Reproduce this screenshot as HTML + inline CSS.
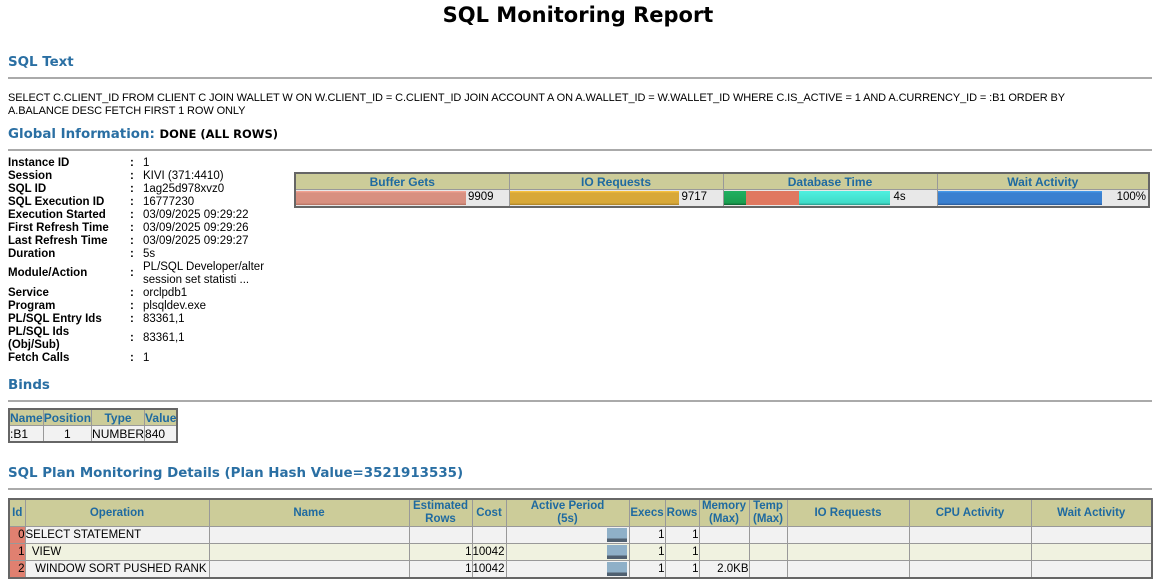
<!DOCTYPE html>
<html><head><style>
body{margin:0;width:1156px;height:581px;overflow:hidden;background:#fff;font-family:"Liberation Sans",Tahoma,sans-serif;color:#000;position:relative}
h1{position:absolute;left:0;width:1156px;top:3px;margin:0;text-align:center;font-size:21px;font-weight:bold;font-family:"DejaVu Sans",sans-serif}
.h{position:absolute;left:8px;font-family:"DejaVu Sans",sans-serif;font-weight:bold;font-size:13.4px;color:#2a6fa3}
.hr{position:absolute;left:8px;width:1144px;height:0;border-top:2px solid #aaa}
.sql{position:absolute;left:8px;top:92px;font-size:11px;line-height:13px;width:1140px;letter-spacing:-0.1px}
.gl{position:absolute;left:8px;font-size:11.5px;font-weight:bold;line-height:13px}
.gc{position:absolute;left:130px;font-size:11.5px;font-weight:bold}
.gv{position:absolute;left:143px;font-size:11.5px;line-height:13px}
table{border-collapse:collapse;position:absolute}
.st{left:294px;top:172px;border:2px solid #666;table-layout:fixed}
.st th{background:#cccc99;color:#1f6aa0;font-size:12px;height:15px;padding:0;border:1px solid #999;font-weight:bold}
.st td{padding:0;border:1px solid #999;height:16px;background:#e8e8e8;font-size:11.5px;position:relative}
.bar{position:absolute;top:1px;bottom:1px;left:0}
.bt{position:absolute;right:2px;top:1px}
.bn{left:8px;top:408px;border:2px solid #666}
.bn th{background:#cccc99;color:#1f6aa0;font-size:12px;padding:0;border:1px solid #999;height:15px}
.bn td{background:#f2f2f2;border:1px solid #999;font-size:12px;padding:0;height:15px}
.pl{left:8px;top:498px;border:2px solid #666;table-layout:fixed;font-size:11.5px}
.pl th{background:#cccc99;color:#1f6aa0;font-size:11.5px;border:1px solid #999;padding:0;height:25px;line-height:13px}
.pl td{border:1px solid #999;padding:0;height:16px;white-space:nowrap}
.pl tr.o td{background:#f2f2f2}
.pl tr.e td{background:#f0f2e0}
.pl td.id{background:#e08070 !important;text-align:right}
.r{text-align:right}
.ap{position:relative}
.ap span{position:absolute;right:2px;top:1px;width:20px;height:14px;background:linear-gradient(#8fb0c8,#8fb0c8 75%,#506070 75%)}
</style></head><body>
<h1>SQL Monitoring Report</h1>
<div class="h" style="top:55px">SQL Text</div>
<div class="hr" style="top:77px"></div>
<div class="sql">SELECT C.CLIENT_ID FROM CLIENT C JOIN WALLET W ON W.CLIENT_ID = C.CLIENT_ID JOIN ACCOUNT A ON A.WALLET_ID = W.WALLET_ID WHERE C.IS_ACTIVE = 1 AND A.CURRENCY_ID = :B1 ORDER BY<br>A.BALANCE DESC FETCH FIRST 1 ROW ONLY</div>
<div class="h" style="top:127px">Global Information: <span style="color:#000;font-size:11.5px">DONE (ALL ROWS)</span></div>
<div class="hr" style="top:149px"></div>

<div class="gl" style="top:157px">Instance ID</div><div class="gc" style="top:157px">:</div><div class="gv" style="top:157px">1</div>
<div class="gl" style="top:170px">Session</div><div class="gc" style="top:170px">:</div><div class="gv" style="top:170px">KIVI (371:4410)</div>
<div class="gl" style="top:183px">SQL ID</div><div class="gc" style="top:183px">:</div><div class="gv" style="top:183px">1ag25d978xvz0</div>
<div class="gl" style="top:196px">SQL Execution ID</div><div class="gc" style="top:196px">:</div><div class="gv" style="top:196px">16777230</div>
<div class="gl" style="top:209px">Execution Started</div><div class="gc" style="top:209px">:</div><div class="gv" style="top:209px">03/09/2025 09:29:22</div>
<div class="gl" style="top:222px">First Refresh Time</div><div class="gc" style="top:222px">:</div><div class="gv" style="top:222px">03/09/2025 09:29:26</div>
<div class="gl" style="top:235px">Last Refresh Time</div><div class="gc" style="top:235px">:</div><div class="gv" style="top:235px">03/09/2025 09:29:27</div>
<div class="gl" style="top:248px">Duration</div><div class="gc" style="top:248px">:</div><div class="gv" style="top:248px">5s</div>
<div class="gl" style="top:267px">Module/Action</div><div class="gc" style="top:267px">:</div><div class="gv" style="top:261px">PL/SQL Developer/alter<br>session set statisti ...</div>
<div class="gl" style="top:287px">Service</div><div class="gc" style="top:287px">:</div><div class="gv" style="top:287px">orclpdb1</div>
<div class="gl" style="top:300px">Program</div><div class="gc" style="top:300px">:</div><div class="gv" style="top:300px">plsqldev.exe</div>
<div class="gl" style="top:313px">PL/SQL Entry Ids</div><div class="gc" style="top:313px">:</div><div class="gv" style="top:313px">83361,1</div>
<div class="gl" style="top:326px">PL/SQL Ids<br>(Obj/Sub)</div><div class="gc" style="top:332px">:</div><div class="gv" style="top:332px">83361,1</div>
<div class="gl" style="top:352px">Fetch Calls</div><div class="gc" style="top:352px">:</div><div class="gv" style="top:352px">1</div>

<table class="st">
<colgroup><col style="width:214px"><col style="width:214px"><col style="width:214px"><col style="width:212px"></colgroup>
<tr><th>Buffer Gets</th><th>IO Requests</th><th>Database Time</th><th>Wait Activity</th></tr>
<tr>
<td><div class="bar" style="width:170px;background:linear-gradient(#f8a898,#d89080 15%,#d89080 85%,#b07060)"></div><span class="bt" style="left:172px;right:auto">9909</span></td>
<td><div class="bar" style="width:169px;background:linear-gradient(#ffc840,#d8a838 15%,#d8a838 85%,#a88028)"></div><span class="bt" style="left:172px;right:auto">9717</span></td>
<td><div class="bar" style="width:22px;background:linear-gradient(#20b060,#1a9e50 85%,#106030)"></div><div class="bar" style="left:22px;width:53px;background:#e07860"></div><div class="bar" style="left:75px;width:91px;background:linear-gradient(#50f0e0,#40dcc8 85%,#2a9888)"></div><span class="bt" style="left:170px;right:auto">4s</span></td>
<td><div class="bar" style="width:164px;background:linear-gradient(#48a0f0,#3a80d0 15%,#3a80d0 85%,#2a5a98)"></div><span class="bt">100%</span></td>
</tr></table>

<div class="h" style="top:378px">Binds</div>
<div class="hr" style="top:400px"></div>
<table class="bn">
<tr><th>Name</th><th>Position</th><th style="width:46px">Type</th><th>Value</th></tr>
<tr><td>:B1</td><td style="text-align:center">1</td><td>NUMBER</td><td>840</td></tr>
</table>

<div class="h" style="top:466px">SQL Plan Monitoring Details (Plan Hash Value=3521913535)</div>
<div class="hr" style="top:488px"></div>

<table class="pl">
<colgroup><col style="width:16px"><col style="width:184px"><col style="width:200px"><col style="width:63px"><col style="width:34px"><col style="width:123px"><col style="width:36px"><col style="width:34px"><col style="width:50px"><col style="width:38px"><col style="width:122px"><col style="width:122px"><col style="width:121px"></colgroup>
<tr><th>Id</th><th>Operation</th><th>Name</th><th>Estimated<br>Rows</th><th>Cost</th><th>Active Period<br>(5s)</th><th>Execs</th><th>Rows</th><th>Memory<br>(Max)</th><th>Temp<br>(Max)</th><th>IO Requests</th><th>CPU Activity</th><th>Wait Activity</th></tr>
<tr class="o"><td class="id">0</td><td>SELECT STATEMENT</td><td></td><td></td><td></td><td class="ap"><span></span></td><td class="r">1</td><td class="r">1</td><td></td><td></td><td></td><td></td><td></td></tr>
<tr class="e"><td class="id">1</td><td>&nbsp;&nbsp;VIEW</td><td></td><td class="r">1</td><td>10042</td><td class="ap"><span></span></td><td class="r">1</td><td class="r">1</td><td></td><td></td><td></td><td></td><td></td></tr>
<tr class="o"><td class="id">2</td><td>&nbsp;&nbsp;&nbsp;WINDOW SORT PUSHED RANK</td><td></td><td class="r">1</td><td>10042</td><td class="ap"><span></span></td><td class="r">1</td><td class="r">1</td><td class="r">2.0KB</td><td></td><td></td><td></td><td></td></tr>
</table>
</body></html>
